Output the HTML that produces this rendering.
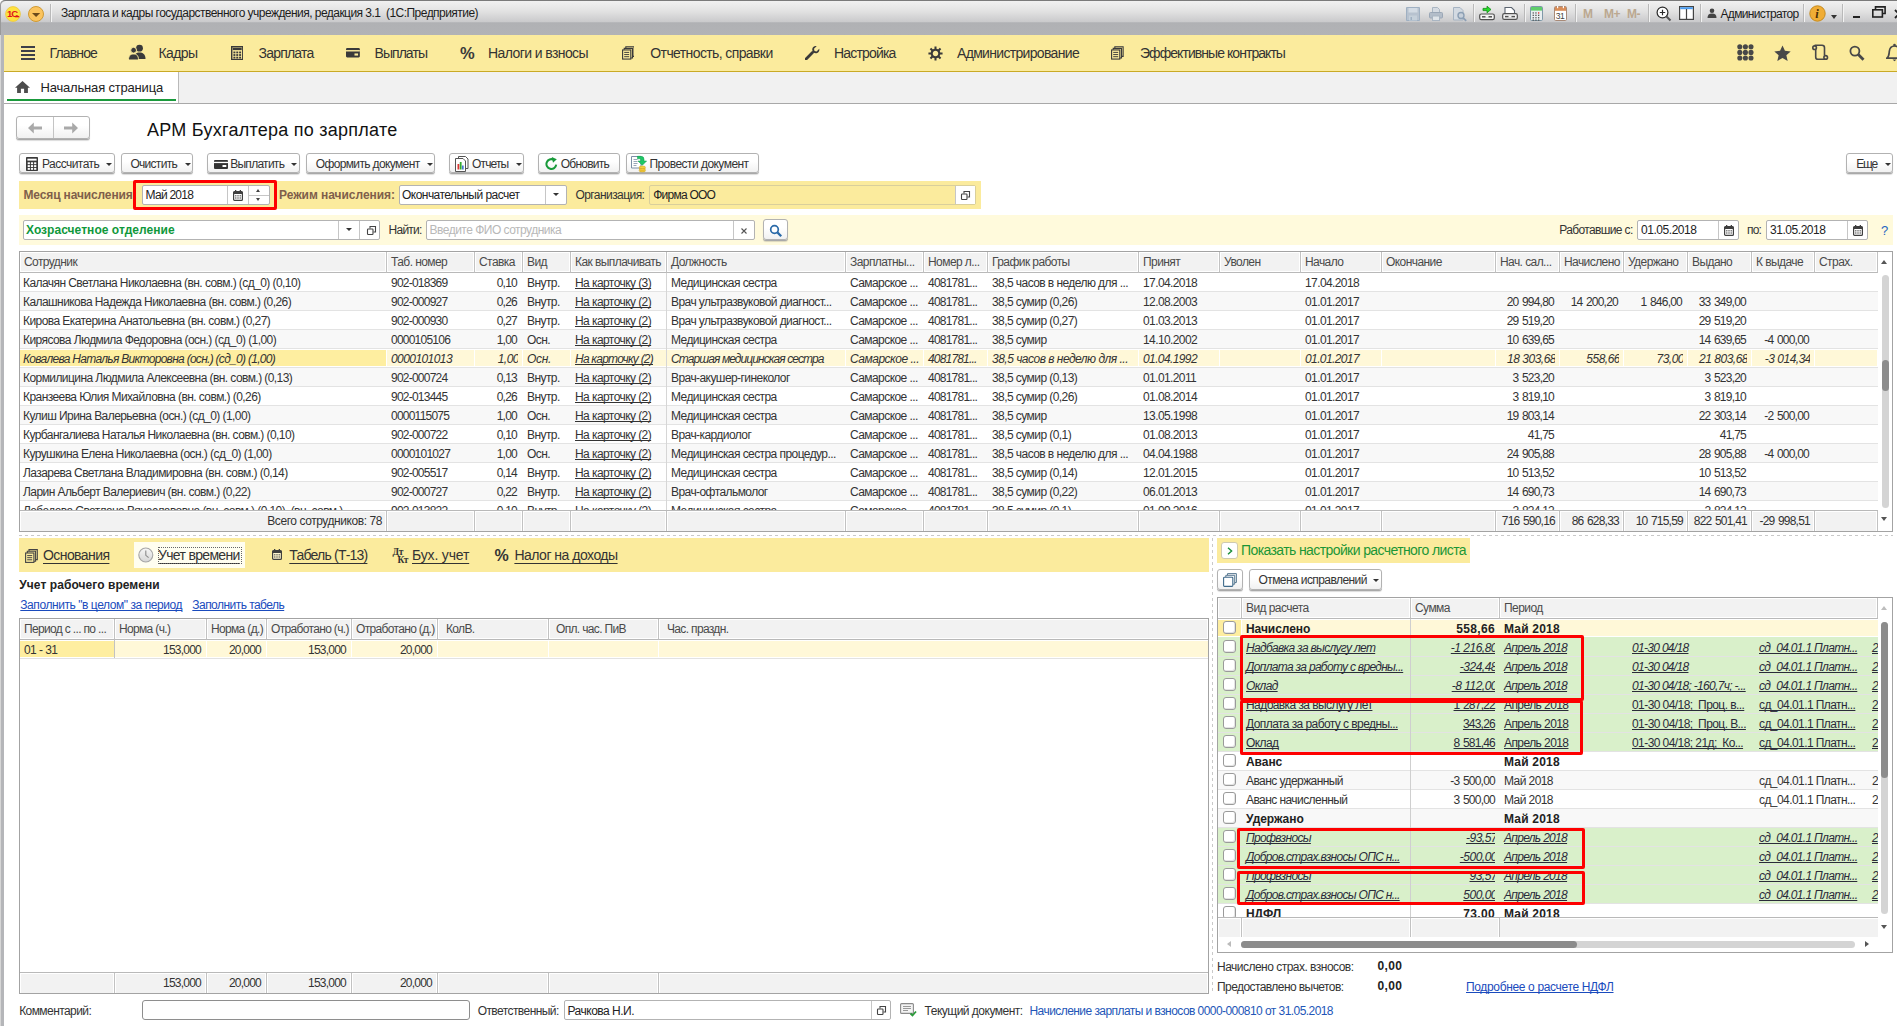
<!DOCTYPE html>
<html lang="ru"><head><meta charset="utf-8"><title>АРМ Бухгалтера по зарплате</title>
<style>
html,body{margin:0;padding:0;background:#fff}
body{width:1897px;height:1026px;overflow:hidden;font-family:"Liberation Sans",sans-serif;font-size:12px;color:#2b2b2b;letter-spacing:-0.55px}
#app{position:relative;width:1897px;height:1026px;overflow:hidden;background:#fff}
#app *{box-sizing:border-box;text-decoration-skip-ink:none}
#app div,#app span,#app i,#app svg{position:absolute;white-space:pre}
i{font-style:normal;display:block}
svg text{font-family:"Liberation Sans",sans-serif}
svg text.sf{font-family:"Liberation Serif",serif}
/* window chrome */
#lb{left:0;top:35px;width:4px;height:991px;background:linear-gradient(to right,#d6d6d6 0,#d6d6d6 1px,#b5b6b9 1px,#b5b6b9 100%)}
#tb{left:0;top:0;width:1897px;height:35px;background:linear-gradient(#f1f1f1 0,#e2e2e2 30%,#cacacc 61%,#b0b1b4 64%,#b2b3b6 100%);border-top:1px solid #7a7a7a;border-top-left-radius:5px;box-shadow:inset 1px 0 0 #9a9a9a}
#tb .t{left:61px;top:5px;font-size:12px;color:#1c1c1c;letter-spacing:-0.52px}
#tb .adm{left:1719px;top:5px;font-size:12px;color:#1c1c1c;letter-spacing:-0.5px}
#tb .sep{top:3px;width:1px;height:18px;background:#b9b9b9;border-right:1px solid #f3f3f3;width:2px}
#tb .m{top:5px;font-size:12px;font-weight:bold;color:#b9a58f;letter-spacing:-0.3px}
#mb{left:4px;top:35px;width:1893px;height:37px;background:#fbeb9d;border-bottom:1px solid #c9aa26}
#mb .mi{top:9px;font-size:14px;color:#333;letter-spacing:-0.9px}
#ts{left:4px;top:72px;width:1893px;height:32px;background:#f1f1f1;border-bottom:1px solid #a8a8a8}
#ts .tab{left:0;top:0;width:175px;height:31px;background:#fff;border-right:1px solid #b9b9b9}
#ts .tab b{display:block;position:absolute;left:3px;top:27px;width:169px;height:2px;background:#1a9a3c}
#ts .tab span{left:36px;top:7px;font-size:13px;color:#222;letter-spacing:-0.2px}
/* buttons */
.btn{height:20px;border:1px solid #b2b2b2;border-radius:3px;background:linear-gradient(#fff 40%,#f1f1f1);box-shadow:0 1px 0 #a9a9a9,0 2px 1px rgba(0,0,0,.14);font-size:12px;color:#333;line-height:18px}
.btn span{top:0}
.dd{width:0;height:0;border-left:3px solid transparent;border-right:3px solid transparent;border-top:3px solid #333}
h1{position:absolute;margin:0;left:147px;top:119px;font-size:18px;font-weight:normal;color:#111;letter-spacing:.25px;line-height:22px}
.inp{height:20px;border:1px solid #b3b3b3;border-radius:2px;background:#fff;line-height:18px;font-size:12px}
.inp span{top:0}
.lbl{font-size:12px;line-height:16px}
a{color:#1a4bbd;text-decoration:underline}
/* grids */
.grid{border:1px solid #a3a3a3;background:#fff;overflow:hidden}
.hc{top:0;height:21px;background:#f2f2f2;box-shadow:inset 0 0 0 1px #fff;border-right:1px solid #c2c2c2;border-bottom:1px solid #b9b9b9;padding:0 0 0 4px;letter-spacing:-0.57px;line-height:20px;color:#4a4a4a;overflow:hidden;box-sizing:border-box;background-clip:padding-box}
.body{overflow:hidden}
.r{left:0;width:100%;height:19px;border-bottom:1px solid #e3e3e3}
.r.alt{background:#f8f8f8}
.r.sel{background:#fff;font-style:italic}
.sel .c,#rt .sel .c{top:1px;height:18px;padding-top:0;background:linear-gradient(#fff8d8,#fff8d8) no-repeat 0 0/100% 16px}
.c{top:0;height:18px;line-height:19px;padding:1px 6px 0 4px;overflow:hidden;letter-spacing:-0.57px;color:#333}
.c.n{letter-spacing:-0.77px;word-spacing:.9px}
.c.d{letter-spacing:-0.6px}
.c.ra{text-align:right}
.c.f{padding-left:3px}
#tt .hc{letter-spacing:-0.66px}
#tt .fc{padding-right:5px}
.c.u{text-decoration:underline}
.sel .c.cur,#rt .sel .c.cur{background:linear-gradient(#feeea0,#feeea0) no-repeat 0 0/100% 16px}
#emp .sel .c{letter-spacing:-0.78px}
.foot{background:#f2f2f2;border-top:1px solid #b9b9b9;box-shadow:inset 0 1px 0 #fff}
.fc{top:0;height:21px;line-height:21px;padding:0 4px 0 3px;border-right:1px solid #c2c2c2;overflow:hidden;box-shadow:inset 1px 0 0 #fff,inset -1px 0 0 #fff;letter-spacing:-0.59px;color:#333}
.fc.n{letter-spacing:-0.77px;word-spacing:.9px}
.fc.ra{text-align:right}
.vsb{background:#fff}
.trk{width:7px;border-radius:4px;background:#d4d4d4}
.thm{width:7px;border-radius:4px;background:#8c8c8c}
.up{width:0;height:0;border-left:3.500px solid transparent;border-right:3.500px solid transparent;border-bottom:4px solid #555}
.up.lt{border-bottom-color:#bdbdbd}
.dn{width:0;height:0;border-left:3.500px solid transparent;border-right:3.500px solid transparent;border-top:4px solid #555}
.hsb{background:#fff}
.hsb .htrk{top:4px;height:7px;border-radius:4px;background:#d4d4d4}
.hsb .hthm{top:4px;height:7px;border-radius:4px;background:#8c8c8c}
.hsb .lf{top:4px;width:0;height:0;border-top:3.500px solid transparent;border-bottom:3.500px solid transparent;border-right:4px solid #bbb}
.hsb .rt{top:4px;width:0;height:0;border-top:3.500px solid transparent;border-bottom:3.500px solid transparent;border-left:4px solid #555}
.dash{height:1px;background:repeating-linear-gradient(to right,#c9c9c9 0,#c9c9c9 3px,transparent 3px,transparent 6px)}
.vdash{width:1px;background:repeating-linear-gradient(to bottom,#c9c9c9 0,#c9c9c9 3px,transparent 3px,transparent 6px)}
/* right grid specifics */
#rt .r.bold{font-weight:bold}
#rt .r.bold .c{font-size:12px;letter-spacing:-0.05px;color:#222}
#rt .r.bold .c.n{letter-spacing:.35px}
#rt .r.bold .c.p{letter-spacing:.2px}
#rt .sel .chk{top:1px}
#rt .r.grn{background:#d9f0ca}
#rt .r.it{font-style:italic}
#rt .r.it .c{letter-spacing:-0.69px}
#rt .r.ul .c{text-decoration:underline;color:#2b2b3a}
#rt .r.sel{font-style:normal;border-bottom-color:#d9f0ca}
#rt .sel .band{left:24px;top:1px;width:636px;height:16px;background:#fff8d8}
#rt .c{padding:1px 5px 0 4px}
#rt .c.n{letter-spacing:-0.77px;word-spacing:.9px}
#rt .c.cb{padding:0;text-decoration:none}
.chk{left:5px;top:2px;width:13px;height:13px;border:1px solid #9a9a9a;border-radius:3px;background:#fff;box-shadow:inset -1px -1px 0 #e4e4e4}
.red{border:3px solid #fe0000;border-radius:2px}

</style></head>
<body>
<div id="app">
<div id="tb"><svg style="left:5px;top:5px" width="16" height="16" viewBox="0 0 16 16"><circle cx="8" cy="8" r="7.400" fill="#ffe23f" stroke="#ecc63a" stroke-width=".800"/><text x="2" y="11.300" font-size="9.500" font-weight="bold" fill="#e0151a" letter-spacing="-1">1С</text><path d="M9.800 10.600H14.200" stroke="#e0151a" stroke-width="1.400"/></svg><svg style="left:28px;top:5px" width="17" height="17" viewBox="0 0 17 17"><circle cx="8" cy="8" r="7.500" fill="#fbc45e" stroke="#cf9a33" stroke-width="1"/><path d="M4 7h8.200l-4.100 3.900z" fill="#6b4a1c"/></svg><i class="sep" style="left:50px"></i><span style="left:61px;top:4.1px;font-size:12px;line-height:16px;letter-spacing:-0.539px;color:#1c1c1c;">Зарплата и кадры государственного учреждения, редакция 3.1  (1С:Предприятие)</span><svg style="left:1406px;top:6px" width="14" height="14" viewBox="0 0 14 14"><path d="M.500 .500h13v13H.500z" fill="#b7c2cf" stroke="#9fb0c2"/><rect x="2.500" y="1" width="9" height="4.500" fill="#d3dbe4"/><rect x="3" y="8.500" width="8" height="5" fill="#c5d0da"/><rect x="4.500" y="10" width="1.500" height="3" fill="#9fb0c2"/></svg><svg style="left:1429px;top:6px" width="14" height="14" viewBox="0 0 14 14"><path d="M3.500 .500h5l2 2v3h-7z" fill="#d5dbe2" stroke="#a9b5c2"/><rect x=".500" y="5.500" width="13" height="5.500" rx="1" fill="#b3bdc9" stroke="#9aa7b6"/><rect x="3.500" y="9" width="7" height="4.500" fill="#dfe4e9" stroke="#a9b5c2"/></svg><svg style="left:1453px;top:6px" width="14" height="15" viewBox="0 0 14 15"><path d="M.500 .500h6.500l3 3v9.500h-9.500z" fill="#d3dae2" stroke="#a5b3c2"/><circle cx="8" cy="8.500" r="3" fill="#c7d0da" stroke="#8c9fb4" stroke-width="1.400"/><path d="M10.200 10.800l3 3" stroke="#8c9fb4" stroke-width="1.800"/></svg><i class="sep" style="left:1473px"></i><svg style="left:1479px;top:4px" width="16" height="16" viewBox="0 0 16 16"><rect x=".700" y="9" width="14.600" height="5.600" rx="1.600" fill="#f4f4f4" stroke="#505050" stroke-width="1.200"/><path d="M3 11.800h10" stroke="#505050" stroke-width="1.500"/><rect x="6.500" y="10.800" width="3" height="2" fill="#f4f4f4"/><path d="M4 3.400h4V1.200L12 4.500 8 7.800V5.600H4z" fill="#25dd2a" stroke="#138a16" stroke-width=".8"/></svg><svg style="left:1502px;top:4px" width="16" height="16" viewBox="0 0 16 16"><path d="M3 9V2.500h6.500l3 3V9" fill="#fff" stroke="#5b6470" stroke-width="1.100"/><rect x=".700" y="8.600" width="14.600" height="5.800" rx="1.600" fill="#f4f4f4" stroke="#505050" stroke-width="1.200"/><path d="M3 11.600h10" stroke="#505050" stroke-width="1.500"/><rect x="6.500" y="10.600" width="3" height="2" fill="#f4f4f4"/></svg><i class="sep" style="left:1524px"></i><svg style="left:1530px;top:5px" width="13" height="15" viewBox="0 0 13 15"><rect x=".500" y=".500" width="12" height="14" rx="1.200" fill="#e9eef0" stroke="#7f99a8"/><rect x="1" y="1" width="11" height="3.600" fill="#5fce6b"/><rect x="2.6" y="6.3" width="1.300" height="1.300" fill="#555"/><rect x="2.6" y="8.7" width="1.300" height="1.300" fill="#555"/><rect x="2.6" y="11.1" width="1.300" height="1.300" fill="#555"/><rect x="2.6" y="13.5" width="1.300" height="1.300" fill="#555"/><rect x="5.3" y="6.3" width="1.300" height="1.300" fill="#555"/><rect x="5.3" y="8.7" width="1.300" height="1.300" fill="#555"/><rect x="5.3" y="11.1" width="1.300" height="1.300" fill="#555"/><rect x="5.3" y="13.5" width="1.300" height="1.300" fill="#555"/><rect x="8" y="6.3" width="1.300" height="1.300" fill="#e02020"/><rect x="8" y="8.7" width="1.300" height="1.300" fill="#555"/><rect x="8" y="11.1" width="1.300" height="1.300" fill="#555"/><rect x="8" y="13.5" width="1.300" height="1.300" fill="#555"/></svg><svg style="left:1554px;top:5px" width="13" height="15" viewBox="0 0 13 15"><rect x=".500" y=".500" width="12" height="14" rx="1.200" fill="#fff" stroke="#a88a78"/><rect x="1" y="1" width="11" height="3.800" fill="#d98d58"/><rect x="3" y="0" width="1.200" height="2.200" fill="#fff"/><rect x="8.800" y="0" width="1.200" height="2.200" fill="#fff"/><text x="1.800" y="12.800" font-size="8.500" fill="#444" letter-spacing="-0.500">31</text></svg><i class="sep" style="left:1575px"></i><span style="left:1583px;top:4.8px;font-size:12px;line-height:16px;letter-spacing:0px;color:#bba890;font-weight:bold;">M</span><span style="left:1604px;top:4.8px;font-size:12px;line-height:16px;letter-spacing:-0.5px;color:#bba890;font-weight:bold;">M+</span><span style="left:1627px;top:4.8px;font-size:12px;line-height:16px;letter-spacing:-0.5px;color:#bba890;font-weight:bold;">M-</span><i class="sep" style="left:1648px"></i><svg style="left:1656px;top:5px" width="16" height="16" viewBox="0 0 16 16"><circle cx="6.500" cy="6.500" r="5.400" fill="#fff" stroke="#2a2a2a" stroke-width="1.200"/><path d="M6.500 3.800v5.400M3.800 6.500h5.400" stroke="#2a2a2a" stroke-width="1.200"/><path d="M10.500 10.500l4 4" stroke="#555" stroke-width="2"/></svg><svg style="left:1679px;top:5px" width="15" height="14" viewBox="0 0 15 14"><rect x=".600" y=".600" width="13.800" height="12.800" fill="#fff" stroke="#444" stroke-width="1.200"/><rect x="1.200" y="1.200" width="12.600" height="2" fill="#4a9cf0"/><path d="M7.500 3v10.500" stroke="#444" stroke-width="1.200"/></svg><i class="sep" style="left:1700px"></i><svg style="left:1707px;top:7px" width="10" height="10" viewBox="0 0 10 10"><circle cx="5" cy="2.700" r="2.300" fill="#444"/><path d="M.500 10c0-3.200 1.500-4.500 4.500-4.500s4.500 1.300 4.500 4.500z" fill="#444"/></svg><span style="left:1720.5px;top:4.8px;font-size:12px;line-height:16px;letter-spacing:-0.66px;color:#1c1c1c;">Администратор</span><i class="sep" style="left:1803px"></i><svg style="left:1809px;top:4px" width="17" height="17" viewBox="0 0 17 17"><circle cx="8.5" cy="8.5" r="7.7" fill="#f0ad35" stroke="#c58a1e" stroke-width="1"/><text x="6.2" y="13" class="sf" font-size="12.5" font-weight="bold" font-style="italic" fill="#4a2e06">i</text></svg><i class="dd" style="left:1831px;top:14px;border-width:4px 3.500px 0 3.500px;border-top-color:#333"></i><i class="sep" style="left:1842px"></i><i style="left:1853px;top:15px;width:7px;height:2px;background:#222"></i><svg style="left:1872px;top:5px" width="14" height="12" viewBox="0 0 14 12"><path d="M3.5 3.5V.9h9.6v6.6h-2.6" fill="none" stroke="#222" stroke-width="1.6"/><rect x=".8" y="3.8" width="9.6" height="7.2" fill="none" stroke="#222" stroke-width="1.6"/></svg><svg style="left:1894px;top:8px" width="10" height="10" viewBox="0 0 10 10"><path d="M1 1l8 8M9 1l-8 8" stroke="#222" stroke-width="1.8"/></svg></div>
<div id="lb"></div>
<div id="mb"><svg style="left:17px;top:11px" width="14" height="14" viewBox="0 0 14 14"><path d="M0 1h14M0 5h14M0 9h14M0 13h14" stroke="#3d3f49" stroke-width="2"/></svg><span style="left:45.5px;top:9.3px;font-size:14px;line-height:18px;letter-spacing:-0.857px;color:#333;">Главное</span><svg style="left:124px;top:9px" width="18" height="17" viewBox="0 0 18 17"><circle cx="11.5" cy="4.2" r="3.4" fill="#3a3a3a"/><path d="M6 15c0-5 2.3-6.5 5.5-6.5S17.5 10 17.500 15z" fill="#3a3a3a"/><circle cx="5.6" cy="6.2" r="2.9" fill="#3a3a3a" stroke="#fbeb9d" stroke-width="1"/><path d="M.5 16c0-4.6 2-6 5-6s5 1.400 5 6z" fill="#3a3a3a" stroke="#fbeb9d" stroke-width="1"/></svg><span style="left:154.5px;top:9.3px;font-size:14px;line-height:18px;letter-spacing:-0.594px;color:#333;">Кадры</span><svg style="left:226.800px;top:10.700px" width="12.500" height="14.300" viewBox="0 0 14 16"><rect x=".8" y=".8" width="12.4" height="14.4" fill="none" stroke="#3a3a3a" stroke-width="1.6"/><rect x="2" y="2" width="10" height="2.6" fill="#3a3a3a"/><g fill="#3a3a3a"><rect x="2.7" y="6.2" width="2.2" height="2"/><rect x="5.9" y="6.2" width="2.2" height="2"/><rect x="9.1" y="6.2" width="2.2" height="2"/><rect x="2.7" y="9.100" width="2.2" height="2"/><rect x="5.9" y="9.100" width="2.2" height="2"/><rect x="9.1" y="9.100" width="2.2" height="2"/><rect x="2.7" y="12" width="2.2" height="2"/><rect x="5.9" y="12" width="2.2" height="2"/><rect x="9.1" y="12" width="2.2" height="2"/></g></svg><span style="left:254.5px;top:9.3px;font-size:14px;line-height:18px;letter-spacing:-0.789px;color:#333;">Зарплата</span><svg style="left:342px;top:12.800px" width="14.300" height="10" viewBox="0 0 16 11"><rect x="0" y="0" width="15.500" height="10.5" rx="1.3" fill="#3a3a3a"/><rect x="0" y="2.2" width="15.5" height="1.6" fill="#fbeb9d"/><rect x="9.500" y="6" width="4" height="2.4" fill="#fbeb9d"/></svg><span style="left:370.5px;top:9.3px;font-size:14px;line-height:18px;letter-spacing:-0.944px;color:#333;">Выплаты</span><span style="left:456px;top:7.6px;font-size:16.5px;line-height:21px;letter-spacing:0px;color:#3a3a3a;font-weight:bold;">%</span><span style="left:484px;top:9.3px;font-size:14px;line-height:18px;letter-spacing:-0.589px;color:#333;">Налоги и взносы</span><svg style="left:617.5px;top:11.300px" width="12.800" height="13.700" viewBox="0 0 15 16"><path d="M4.5 2.500V.8h9.7v11.4h-2" fill="none" stroke="#3a3a3a" stroke-width="1.3"/><path d="M2.6 4.4V2.700h9.700v11.400h-2" fill="none" stroke="#3a3a3a" stroke-width="1.3"/><rect x=".7" y="4.6" width="9.6" height="10.700" fill="#fbeb9d" stroke="#3a3a3a" stroke-width="1.3"/><path d="M2.6 7.500h5.800M2.600 10h5.800M2.600 12.500h5.800" stroke="#3a3a3a" stroke-width="1.1"/></svg><span style="left:646.3px;top:9.3px;font-size:14px;line-height:18px;letter-spacing:-0.609px;color:#333;">Отчетность, справки</span><svg style="left:800.500px;top:11px" width="15" height="14" viewBox="0 0 17 16"><path d="M1.2 14.800L8.500 7.500" stroke="#3a3a3a" stroke-width="3.200" stroke-linecap="round"/><path d="M16.2 3.200l-3 3-2.400-.6-.6-2.400 3-3c-2.800-.7-5.600 1.700-4.900 4.700.4 2.600 3.200 4 5.500 3.100 1.900-.8 2.900-2.800 2.400-4.800z" fill="#3a3a3a"/></svg><span style="left:830px;top:9.3px;font-size:14px;line-height:18px;letter-spacing:-0.814px;color:#333;">Настройка</span><svg style="left:923.500px;top:10.800px" width="15" height="15" viewBox="0 0 17 17"><g transform="translate(8.5 8.5)"><circle r="4.3" fill="none" stroke="#3a3a3a" stroke-width="2.400"/><g stroke="#3a3a3a" stroke-width="2.300"><path d="M0-8v3M0 5v3M-8 0h3M5 0h3M-5.700-5.700l2.200 2.200M3.500 3.500l2.200 2.200M-5.700 5.700l2.200-2.200M3.500-3.500l2.200-2.200"/></g></g></svg><span style="left:953px;top:9.3px;font-size:14px;line-height:18px;letter-spacing:-0.676px;color:#333;">Администрирование</span><svg style="left:1107.3px;top:11.300px" width="12.800" height="13.700" viewBox="0 0 15 16"><path d="M4.5 2.500V.8h9.7v11.4h-2" fill="none" stroke="#3a3a3a" stroke-width="1.3"/><path d="M2.6 4.4V2.700h9.700v11.400h-2" fill="none" stroke="#3a3a3a" stroke-width="1.3"/><rect x=".7" y="4.6" width="9.6" height="10.700" fill="#fbeb9d" stroke="#3a3a3a" stroke-width="1.3"/><path d="M2.6 7.500h5.800M2.600 10h5.800M2.600 12.500h5.800" stroke="#3a3a3a" stroke-width="1.1"/></svg><span style="left:1136px;top:9.3px;font-size:14px;line-height:18px;letter-spacing:-0.946px;color:#333;">Эффективные контракты</span><svg style="left:1733px;top:9.2px" width="17" height="17" viewBox="0 0 17 17"><g fill="#484848"><circle cx="2.8" cy="2.8" r="2.550"/><circle cx="2.8" cy="8.4" r="2.550"/><circle cx="2.8" cy="14" r="2.550"/><circle cx="8.4" cy="2.8" r="2.550"/><circle cx="8.4" cy="8.4" r="2.550"/><circle cx="8.4" cy="14" r="2.550"/><circle cx="14" cy="2.8" r="2.550"/><circle cx="14" cy="8.4" r="2.550"/><circle cx="14" cy="14" r="2.550"/></g></svg><svg style="left:1770px;top:10px" width="17" height="16" viewBox="0 0 18 17"><path d="M9 .5l2.600 5.700 6.100.6-4.600 4.100 1.400 6.100L9 13.800 3.500 17l1.400-6.100L.3 6.800l6.100-.6z" fill="#484848"/></svg><svg style="left:1808px;top:9px" width="17" height="18" viewBox="0 0 17 18"><g fill="none" stroke="#484848" stroke-width="1.600"><circle cx="2.600" cy="3.700" r="1.800"/><path d="M2.600 1.300H10Q12.500 1.300 12.500 3.800V11.400"/><circle cx="13.700" cy="13.400" r="1.800"/><path d="M13.700 15.300H6.100Q3.700 15.300 3.700 12.900V5.600"/></g></svg><svg style="left:1845px;top:10px" width="17" height="17" viewBox="0 0 17 17"><circle cx="5.900" cy="6.100" r="4.500" fill="none" stroke="#484848" stroke-width="1.800"/><path d="M9.300 9.500l5.200 5.200" stroke="#484848" stroke-width="2.800"/></svg><svg style="left:1882px;top:8px" width="16" height="19" viewBox="0 0 16 19"><path d="M.800 15.200c2.400-1.600 2.200-4 2.500-6.800C3.700 5 6 3 8.500 3s4.800 2 5.200 5.400c.3 2.800.1 5.200 2.500 6.800z" fill="none" stroke="#484848" stroke-width="1.700"/><circle cx="8.500" cy="2" r="1.300" fill="#484848"/><path d="M6.500 16.500l2 1.800 2-1.800z" fill="#484848"/></svg></div>
<div id="ts"><div class="tab"><svg style="left:11px;top:8.800px" width="15" height="12" viewBox="0 0 15 12"><path d="M7.500 0L0 6.800h2.100V12h3.800V7.800h3.200V12h3.800V6.800H15z" fill="#4d4d4d"/></svg><span style="left:36.5px;top:6.9px;font-size:13px;line-height:17px;letter-spacing:-0.183px;color:#222;">Начальная страница</span><b></b></div></div>
<div class="btn" style="left:16px;top:116px;width:74px;height:23px"><i style="left:36px;top:0;width:1px;height:21px;background:#c4c4c4"></i><svg style="left:11px;top:5px" width="15" height="12" viewBox="0 0 15 12"><path d="M0 6L5.800.500V4.500H14v3H5.800v4z" fill="#a9a9a9"/></svg><svg style="left:47px;top:5px" width="15" height="12" viewBox="0 0 15 12"><path d="M14 6L8.200.500V4.500H0v3h8.200v4z" fill="#a9a9a9"/></svg></div>
<h1 style="letter-spacing:0.252px">АРМ Бухгалтера по зарплате</h1>
<div class="btn" style="left:19px;top:153px;width:96px;height:20px"><svg style="left:6px;top:3px" width="12" height="14" viewBox="0 0 12 14"><rect width="12" height="14" rx=".8" fill="#3a3a3a"/><g fill="#fff"><rect x="1.400" y="1.700" width="9.200" height="1.900"/><rect x="1.7" y="5.3" width="2.200" height="1.900"/><rect x="1.7" y="8.1" width="2.200" height="1.900"/><rect x="1.7" y="10.9" width="2.200" height="1.900"/><rect x="4.9" y="5.3" width="2.200" height="1.900"/><rect x="4.9" y="8.1" width="2.200" height="1.900"/><rect x="4.9" y="10.9" width="2.200" height="1.900"/><rect x="8.1" y="5.3" width="2.200" height="1.900"/><rect x="8.1" y="8.1" width="2.200" height="1.900"/><rect x="8.1" y="10.9" width="2.200" height="1.900"/></g></svg><span style="left:22px;top:2px;font-size:12px;line-height:16px;letter-spacing:-0.542px;color:#333;">Рассчитать</span><i class="dd" style="left:85.5px;top:9px"></i></div>
<div class="btn" style="left:121px;top:153px;width:72px;height:20px"><span style="left:8.4px;top:2px;font-size:12px;line-height:16px;letter-spacing:-0.706px;color:#333;">Очистить</span><i class="dd" style="left:62.5px;top:9px"></i></div>
<div class="btn" style="left:207px;top:153px;width:93px;height:20px"><svg style="left:6px;top:6px" width="14" height="9" viewBox="0 0 14 9"><rect width="14" height="9" rx="1" fill="#333"/><rect y="1.800" width="14" height="1.300" fill="#fff"/><rect x="8.500" y="5" width="3.800" height="2" fill="#fff"/></svg><span style="left:22.2px;top:2px;font-size:12px;line-height:16px;letter-spacing:-0.722px;color:#333;">Выплатить</span><i class="dd" style="left:83px;top:9px"></i></div>
<div class="btn" style="left:306px;top:153px;width:129px;height:20px"><span style="left:8.7px;top:2px;font-size:12px;line-height:16px;letter-spacing:-0.633px;color:#333;">Оформить документ</span><i class="dd" style="left:119.5px;top:9px"></i></div>
<div class="btn" style="left:449px;top:153px;width:75px;height:20px"><svg style="left:5px;top:2px" width="16" height="16" viewBox="0 0 16 16"><path d="M3.500 2.500V.500h7l2.500 2.500v9.500h-2" fill="#fff" stroke="#555"/><path d="M.5 2.500h7.500l2.500 2.500v10.500H.5z" fill="#fff" stroke="#555"/><rect x="2.500" y="8" width="1.800" height="5.500" fill="#d33"/><rect x="4.800" y="6" width="1.800" height="7.500" fill="#3a3"/><rect x="7.100" y="9.500" width="1.500" height="4" fill="#36c"/></svg><span style="left:22px;top:2px;font-size:12px;line-height:16px;letter-spacing:-0.847px;color:#333;">Отчеты</span><i class="dd" style="left:65.5px;top:9px"></i></div>
<div class="btn" style="left:538px;top:153px;width:82px;height:20px"><svg style="left:6px;top:3px" width="13" height="14" viewBox="0 0 13 14"><path d="M11.200 7.600A4.900 4.900 0 1 1 8.600 2.700" fill="none" stroke="#189a3a" stroke-width="2"/><path d="M6.800 0L11.800 2.300 8 5.800z" fill="#189a3a"/></svg><span style="left:21.8px;top:2px;font-size:12px;line-height:16px;letter-spacing:-0.78px;color:#333;">Обновить</span></div>
<div class="btn" style="left:626px;top:153px;width:133px;height:20px"><svg style="left:4px;top:1px" width="17" height="18" viewBox="0 0 17 18"><path d="M.500 1.500h9.500v11.500h-9.500z" fill="#fff" stroke="#7c8ea6"/><path d="M2.500 4.500h4M2.500 6.500h4M2.500 8.500h4M2.500 10.500h3" stroke="#9aa7b8"/><path d="M6.500 1.300h3.500q3 0 3 3V6h2.600L11.300 10.300 7 6h2.700V4.600q0-.8-.8-.8H6.500z" fill="#1fc766" stroke="#0c9a48" stroke-width=".5"/><g fill="#f6cf3e" stroke="#c79a1c" stroke-width=".5"><ellipse cx="11.300" cy="15.700" rx="3.200" ry="1.300"/><ellipse cx="11.300" cy="14" rx="3.200" ry="1.300"/><ellipse cx="11.300" cy="12.300" rx="3.200" ry="1.300"/></g></svg><span style="left:22.4px;top:2px;font-size:12px;line-height:16px;letter-spacing:-0.542px;color:#333;">Провести документ</span></div>
<div class="btn" style="left:1846px;top:153px;width:47px;height:20px"><span style="left:9.3px;top:2px;font-size:12px;line-height:16px;letter-spacing:-1.307px;color:#333;">Еще</span><i class="dd" style="left:37.5px;top:9px"></i></div>
<div style="left:19px;top:181px;width:962px;height:28px;background:#fbeb9d"></div>
<span style="left:23.5px;top:187px;font-size:12px;line-height:16px;letter-spacing:-0.136px;color:#7f5f4b;font-weight:bold;">Месяц начисления:</span><div class="inp" style="left:142px;top:185px;width:128px"><i style="left:84px;top:0;width:1px;height:18px;background:#c6c6c6"></i><i style="left:105px;top:0;width:1px;height:18px;background:#c6c6c6"></i><i style="left:106px;top:8.500px;width:20px;height:1px;background:#c6c6c6"></i><span style="left:2.6px;top:1px;font-size:12px;line-height:16px;letter-spacing:-0.756px;color:#222;">Май 2018</span><svg style="left:90px;top:3.5px" width="10" height="11" viewBox="0 0 10 11"><rect x=".600" y="1.600" width="8.800" height="8.800" rx="1" fill="#fff" stroke="#3f3f3f" stroke-width="1.200"/><rect x=".600" y="1.600" width="8.800" height="2.400" fill="#3f3f3f"/><rect x="2" y="0" width="1.300" height="2.200" fill="#3f3f3f"/><rect x="6.700" y="0" width="1.300" height="2.200" fill="#3f3f3f"/><g fill="#3f3f3f"><rect x="2.200" y="5.200" width="1.200" height="1.200"/><rect x="4.400" y="5.200" width="1.200" height="1.200"/><rect x="6.600" y="5.200" width="1.200" height="1.200"/><rect x="2.200" y="7.400" width="1.200" height="1.200"/><rect x="4.400" y="7.400" width="1.200" height="1.200"/><rect x="6.600" y="7.400" width="1.200" height="1.200"/></g></svg><i class="dd" style="left:113px;top:3px;border-width:0 2px 3px 2px;border-color:transparent transparent #444 transparent;border-style:solid"></i><i class="dd" style="left:113px;top:12px;border-width:3px 2px 0 2px;border-color:#444 transparent transparent transparent;border-style:solid"></i></div>
<span style="left:279px;top:187px;font-size:12px;line-height:16px;letter-spacing:-0.042px;color:#7f5f4b;font-weight:bold;">Режим начисления:</span><div class="inp" style="left:399px;top:185px;width:168px"><i style="left:145px;top:0;width:1px;height:18px;background:#c6c6c6"></i><span style="left:2px;top:1px;font-size:12px;line-height:16px;letter-spacing:-0.53px;color:#222;">Окончательный расчет</span><i class="dd" style="left:153px;top:7px"></i></div>
<span style="left:575.4px;top:187px;font-size:12px;line-height:16px;letter-spacing:-0.56px;color:#333;">Организация:</span><div class="inp" style="left:649px;top:185px;width:327px;background:#fbeb9d;border-color:#d9cf9c"><i style="left:305px;top:0;width:20px;height:18px;background:#fff;border-left:1px solid #c6c6c6"></i><span style="left:3.2px;top:1px;font-size:12px;line-height:16px;letter-spacing:-0.752px;color:#222;">Фирма ООО</span><svg style="left:310px;top:3.5px" width="11" height="11" viewBox="0 0 11 11"><path d="M4 3.500V1.500h5.500v5.500H7.500" fill="none" stroke="#444" stroke-width="1.100"/><rect x="1.500" y="4" width="5.500" height="5.500" rx=".700" fill="#fff" stroke="#444" stroke-width="1.100"/></svg></div>
<div class="red" style="left:133px;top:180px;width:144px;height:30px"></div>
<div style="left:19px;top:215px;width:1874px;height:30px;background:#fffadc"></div>
<div class="inp" style="left:23px;top:220px;width:357px"><i style="left:314px;top:0;width:1px;height:18px;background:#c6c6c6"></i><i style="left:335px;top:0;width:1px;height:18px;background:#c6c6c6"></i><span style="left:2px;top:1px;font-size:12px;line-height:16px;letter-spacing:0.042px;color:#10983b;font-weight:bold;">Хозрасчетное отделение</span><i class="dd" style="left:321.5px;top:7px"></i><svg style="left:341.5px;top:3.5px" width="11" height="11" viewBox="0 0 11 11"><path d="M4 3.500V1.500h5.500v5.500H7.500" fill="none" stroke="#444" stroke-width="1.100"/><rect x="1.500" y="4" width="5.500" height="5.500" rx=".700" fill="#fff" stroke="#444" stroke-width="1.100"/></svg></div>
<span style="left:388.6px;top:222px;font-size:12px;line-height:16px;letter-spacing:-0.763px;color:#333;">Найти:</span><div class="inp" style="left:426px;top:220px;width:329px"><i style="left:306px;top:0;width:1px;height:18px;background:#c6c6c6"></i><span style="left:2.6px;top:1px;font-size:12px;line-height:16px;letter-spacing:-0.516px;color:#b8b8b8;">Введите ФИО сотрудника</span><svg style="left:313px;top:5.500px" width="8" height="8" viewBox="0 0 8 8"><path d="M1.500 1.500l5 5M6.500 1.500l-5 5" stroke="#555" stroke-width="1.100"/></svg></div>
<div class="btn" style="left:763px;top:219px;width:25px;height:21px"><svg style="left:5px;top:3.500px" width="14" height="14" viewBox="0 0 14 14"><circle cx="5.500" cy="5.500" r="3.800" fill="#fff" stroke="#2a6aa8" stroke-width="1.700"/><path d="M8.400 8.400l3.800 3.800" stroke="#2a6aa8" stroke-width="2.300"/></svg></div>
<span style="left:1559.2px;top:222px;font-size:12px;line-height:16px;letter-spacing:-0.627px;color:#333;">Работавшие с:</span><div class="inp" style="left:1637px;top:220px;width:102px"><i style="left:80px;top:0;width:1px;height:18px;background:#c6c6c6"></i><span style="left:3px;top:1px;font-size:12px;line-height:16px;letter-spacing:-0.456px;color:#222;">01.05.2018</span><svg style="left:85.5px;top:3.5px" width="10" height="11" viewBox="0 0 10 11"><rect x=".600" y="1.600" width="8.800" height="8.800" rx="1" fill="#fff" stroke="#3f3f3f" stroke-width="1.200"/><rect x=".600" y="1.600" width="8.800" height="2.400" fill="#3f3f3f"/><rect x="2" y="0" width="1.300" height="2.200" fill="#3f3f3f"/><rect x="6.700" y="0" width="1.300" height="2.200" fill="#3f3f3f"/><g fill="#3f3f3f"><rect x="2.200" y="5.200" width="1.200" height="1.200"/><rect x="4.400" y="5.200" width="1.200" height="1.200"/><rect x="6.600" y="5.200" width="1.200" height="1.200"/><rect x="2.200" y="7.400" width="1.200" height="1.200"/><rect x="4.400" y="7.400" width="1.200" height="1.200"/><rect x="6.600" y="7.400" width="1.200" height="1.200"/></g></svg></div>
<span style="left:1747px;top:222px;font-size:12px;line-height:16px;letter-spacing:-0.839px;color:#333;">по:</span><div class="inp" style="left:1766px;top:220px;width:102px"><i style="left:80px;top:0;width:1px;height:18px;background:#c6c6c6"></i><span style="left:3px;top:1px;font-size:12px;line-height:16px;letter-spacing:-0.456px;color:#222;">31.05.2018</span><svg style="left:85.5px;top:3.5px" width="10" height="11" viewBox="0 0 10 11"><rect x=".600" y="1.600" width="8.800" height="8.800" rx="1" fill="#fff" stroke="#3f3f3f" stroke-width="1.200"/><rect x=".600" y="1.600" width="8.800" height="2.400" fill="#3f3f3f"/><rect x="2" y="0" width="1.300" height="2.200" fill="#3f3f3f"/><rect x="6.700" y="0" width="1.300" height="2.200" fill="#3f3f3f"/><g fill="#3f3f3f"><rect x="2.200" y="5.200" width="1.200" height="1.200"/><rect x="4.400" y="5.200" width="1.200" height="1.200"/><rect x="6.600" y="5.200" width="1.200" height="1.200"/><rect x="2.200" y="7.400" width="1.200" height="1.200"/><rect x="4.400" y="7.400" width="1.200" height="1.200"/><rect x="6.600" y="7.400" width="1.200" height="1.200"/></g></svg></div>
<span style="left:1881px;top:221.5px;font-size:13px;line-height:17px;letter-spacing:0px;color:#1f66c2;">?</span><div class="grid" id="emp" style="left:19px;top:251px;width:1874px;height:281px">
<div class="hc" style="left:0px;top:0;width:367px">Сотрудник</div><div class="hc" style="left:367px;top:0;width:88px">Таб. номер</div><div class="hc" style="left:455px;top:0;width:48px">Ставка</div><div class="hc" style="left:503px;top:0;width:48px">Вид</div><div class="hc" style="left:551px;top:0;width:96px">Как выплачивать</div><div class="hc" style="left:647px;top:0;width:179px">Должность</div><div class="hc" style="left:826px;top:0;width:78px">Зарплатны...</div><div class="hc" style="left:904px;top:0;width:64px">Номер л...</div><div class="hc" style="left:968px;top:0;width:151px">График работы</div><div class="hc" style="left:1119px;top:0;width:81px">Принят</div><div class="hc" style="left:1200px;top:0;width:81px">Уволен</div><div class="hc" style="left:1281px;top:0;width:81px">Начало</div><div class="hc" style="left:1362px;top:0;width:114px">Окончание</div><div class="hc" style="left:1476px;top:0;width:64px">Нач. сал...</div><div class="hc" style="left:1540px;top:0;width:64px">Начислено</div><div class="hc" style="left:1604px;top:0;width:64px">Удержано</div><div class="hc" style="left:1668px;top:0;width:64px">Выдано</div><div class="hc" style="left:1732px;top:0;width:63px">К выдаче</div><div class="hc" style="left:1795px;top:0;width:63px">Страх.</div><div class="body" style="left:0;top:21px;width:1858px;height:237px">
<div class="r" style="top:0px"><span class="c f" style="left:0px;width:367px">Калачян Светлана Николаевна (вн. совм.) (сд_0) (0,10)</span><span class="c n" style="left:367px;width:88px">902-018369</span><span class="c ra n" style="left:455px;width:48px">0,10</span><span class="c" style="left:503px;width:48px">Внутр.</span><span class="c u" style="left:551px;width:96px">На карточку (3)</span><span class="c" style="left:647px;width:179px">Медицинская сестра</span><span class="c" style="left:826px;width:78px">Самарское ...</span><span class="c n" style="left:904px;width:64px">4081781...</span><span class="c" style="left:968px;width:151px">38,5 часов в неделю для ...</span><span class="c d" style="left:1119px;width:81px">17.04.2018</span><span class="c d" style="left:1281px;width:81px">17.04.2018</span></div>
<div class="r alt" style="top:19px"><span class="c f" style="left:0px;width:367px">Калашникова Надежда Николаевна (вн. совм.) (0,26)</span><span class="c n" style="left:367px;width:88px">902-000927</span><span class="c ra n" style="left:455px;width:48px">0,26</span><span class="c" style="left:503px;width:48px">Внутр.</span><span class="c u" style="left:551px;width:96px">На карточку (2)</span><span class="c" style="left:647px;width:179px">Врач ультразвуковой диагност...</span><span class="c" style="left:826px;width:78px">Самарское ...</span><span class="c n" style="left:904px;width:64px">4081781...</span><span class="c" style="left:968px;width:151px">38,5 сумир (0,26)</span><span class="c d" style="left:1119px;width:81px">12.08.2003</span><span class="c d" style="left:1281px;width:81px">01.01.2017</span><span class="c ra n" style="left:1476px;width:64px">20 994,80</span><span class="c ra n" style="left:1540px;width:64px">14 200,20</span><span class="c ra n" style="left:1604px;width:64px">1 846,00</span><span class="c ra n" style="left:1668px;width:64px">33 349,00</span></div>
<div class="r" style="top:38px"><span class="c f" style="left:0px;width:367px">Кирова Екатерина Анатольевна (вн. совм.) (0,27)</span><span class="c n" style="left:367px;width:88px">902-000930</span><span class="c ra n" style="left:455px;width:48px">0,27</span><span class="c" style="left:503px;width:48px">Внутр.</span><span class="c u" style="left:551px;width:96px">На карточку (2)</span><span class="c" style="left:647px;width:179px">Врач ультразвуковой диагност...</span><span class="c" style="left:826px;width:78px">Самарское ...</span><span class="c n" style="left:904px;width:64px">4081781...</span><span class="c" style="left:968px;width:151px">38,5 сумир (0,27)</span><span class="c d" style="left:1119px;width:81px">01.03.2013</span><span class="c d" style="left:1281px;width:81px">01.01.2017</span><span class="c ra n" style="left:1476px;width:64px">29 519,20</span><span class="c ra n" style="left:1668px;width:64px">29 519,20</span></div>
<div class="r alt" style="top:57px"><span class="c f" style="left:0px;width:367px">Кирясова Людмила Федоровна (осн.) (сд_0) (1,00)</span><span class="c n" style="left:367px;width:88px">0000105106</span><span class="c ra n" style="left:455px;width:48px">1,00</span><span class="c" style="left:503px;width:48px">Осн.</span><span class="c u" style="left:551px;width:96px">На карточку (2)</span><span class="c" style="left:647px;width:179px">Медицинская сестра</span><span class="c" style="left:826px;width:78px">Самарское ...</span><span class="c n" style="left:904px;width:64px">4081781...</span><span class="c" style="left:968px;width:151px">38,5 сумир</span><span class="c d" style="left:1119px;width:81px">14.10.2002</span><span class="c d" style="left:1281px;width:81px">01.01.2017</span><span class="c ra n" style="left:1476px;width:64px">10 639,65</span><span class="c ra n" style="left:1668px;width:64px">14 639,65</span><span class="c ra n" style="left:1732px;width:63px">-4 000,00</span></div>
<div class="r sel" style="top:76px"><span class="c cur f" style="left:0px;width:366px;letter-spacing:-0.711px">Ковалева Наталья Викторовна (осн.) (сд_0) (1,00)</span><span class="c n" style="left:367px;width:87px;letter-spacing:-0.575px">0000101013</span><span class="c ra n" style="left:455px;width:47px;padding-right:3px;letter-spacing:-0.5px;word-spacing:0">1,00</span><i style="left:498px;top:1px;width:4px;height:16px;background:#fff8d8"></i><span class="c" style="left:503px;width:47px;letter-spacing:-0.32px">Осн.</span><span class="c u" style="left:551px;width:95px;letter-spacing:-0.771px">На карточку (2)</span><span class="c" style="left:647px;width:178px;letter-spacing:-0.915px">Старшая медицинская сестра</span><span class="c" style="left:826px;width:77px;letter-spacing:-0.493px">Самарское ...</span><span class="c n" style="left:904px;width:63px;letter-spacing:-0.822px">4081781...</span><span class="c" style="left:968px;width:150px;letter-spacing:-0.51px">38,5 часов в неделю для ...</span><span class="c d" style="left:1119px;width:80px;letter-spacing:-0.606px">01.04.1992</span><span class="c d" style="left:1200px;width:80px"></span><span class="c d" style="left:1281px;width:80px;letter-spacing:-0.606px">01.01.2017</span><span class="c d" style="left:1362px;width:113px"></span><span class="c ra n" style="left:1476px;width:63px;padding-right:3px;letter-spacing:-0.5px;word-spacing:0">18 303,68</span><i style="left:1535px;top:1px;width:4px;height:16px;background:#fff8d8"></i><span class="c ra n" style="left:1540px;width:63px;padding-right:3px;letter-spacing:-0.5px;word-spacing:0">558,66</span><i style="left:1599px;top:1px;width:4px;height:16px;background:#fff8d8"></i><span class="c ra n" style="left:1604px;width:63px;padding-right:3px;letter-spacing:-0.5px;word-spacing:0">73,00</span><i style="left:1663px;top:1px;width:4px;height:16px;background:#fff8d8"></i><span class="c ra n" style="left:1668px;width:63px;padding-right:3px;letter-spacing:-0.5px;word-spacing:0">21 803,68</span><i style="left:1727px;top:1px;width:4px;height:16px;background:#fff8d8"></i><span class="c ra n" style="left:1732px;width:62px;padding-right:3px;letter-spacing:-0.5px;word-spacing:0">-3 014,34</span><i style="left:1790px;top:1px;width:4px;height:16px;background:#fff8d8"></i><span class="c ra n" style="left:1795px;width:62px;padding-right:3px;letter-spacing:-0.5px;word-spacing:0"></span></div>
<div class="r alt" style="top:95px"><span class="c f" style="left:0px;width:367px">Кормилицина Людмила Алексеевна (вн. совм.) (0,13)</span><span class="c n" style="left:367px;width:88px">902-000724</span><span class="c ra n" style="left:455px;width:48px">0,13</span><span class="c" style="left:503px;width:48px">Внутр.</span><span class="c u" style="left:551px;width:96px">На карточку (2)</span><span class="c" style="left:647px;width:179px">Врач-акушер-гинеколог</span><span class="c" style="left:826px;width:78px">Самарское ...</span><span class="c n" style="left:904px;width:64px">4081781...</span><span class="c" style="left:968px;width:151px">38,5 сумир (0,13)</span><span class="c d" style="left:1119px;width:81px">01.01.2011</span><span class="c d" style="left:1281px;width:81px">01.01.2017</span><span class="c ra n" style="left:1476px;width:64px">3 523,20</span><span class="c ra n" style="left:1668px;width:64px">3 523,20</span></div>
<div class="r" style="top:114px"><span class="c f" style="left:0px;width:367px">Кранзеева Юлия Михайловна (вн. совм.) (0,26)</span><span class="c n" style="left:367px;width:88px">902-013445</span><span class="c ra n" style="left:455px;width:48px">0,26</span><span class="c" style="left:503px;width:48px">Внутр.</span><span class="c u" style="left:551px;width:96px">На карточку (2)</span><span class="c" style="left:647px;width:179px">Медицинская сестра</span><span class="c" style="left:826px;width:78px">Самарское ...</span><span class="c n" style="left:904px;width:64px">4081781...</span><span class="c" style="left:968px;width:151px">38,5 сумир (0,26)</span><span class="c d" style="left:1119px;width:81px">01.08.2014</span><span class="c d" style="left:1281px;width:81px">01.01.2017</span><span class="c ra n" style="left:1476px;width:64px">3 819,10</span><span class="c ra n" style="left:1668px;width:64px">3 819,10</span></div>
<div class="r alt" style="top:133px"><span class="c f" style="left:0px;width:367px">Кулиш Ирина Валерьевна (осн.) (сд_0) (1,00)</span><span class="c n" style="left:367px;width:88px">0000115075</span><span class="c ra n" style="left:455px;width:48px">1,00</span><span class="c" style="left:503px;width:48px">Осн.</span><span class="c u" style="left:551px;width:96px">На карточку (2)</span><span class="c" style="left:647px;width:179px">Медицинская сестра</span><span class="c" style="left:826px;width:78px">Самарское ...</span><span class="c n" style="left:904px;width:64px">4081781...</span><span class="c" style="left:968px;width:151px">38,5 сумир</span><span class="c d" style="left:1119px;width:81px">13.05.1998</span><span class="c d" style="left:1281px;width:81px">01.01.2017</span><span class="c ra n" style="left:1476px;width:64px">19 803,14</span><span class="c ra n" style="left:1668px;width:64px">22 303,14</span><span class="c ra n" style="left:1732px;width:63px">-2 500,00</span></div>
<div class="r" style="top:152px"><span class="c f" style="left:0px;width:367px">Курбангалиева Наталья Николаевна (вн. совм.) (0,10)</span><span class="c n" style="left:367px;width:88px">902-000722</span><span class="c ra n" style="left:455px;width:48px">0,10</span><span class="c" style="left:503px;width:48px">Внутр.</span><span class="c u" style="left:551px;width:96px">На карточку (2)</span><span class="c" style="left:647px;width:179px">Врач-кардиолог</span><span class="c" style="left:826px;width:78px">Самарское ...</span><span class="c n" style="left:904px;width:64px">4081781...</span><span class="c" style="left:968px;width:151px">38,5 сумир (0,1)</span><span class="c d" style="left:1119px;width:81px">01.08.2013</span><span class="c d" style="left:1281px;width:81px">01.01.2017</span><span class="c ra n" style="left:1476px;width:64px">41,75</span><span class="c ra n" style="left:1668px;width:64px">41,75</span></div>
<div class="r alt" style="top:171px"><span class="c f" style="left:0px;width:367px">Курушкина Елена Николаевна (осн.) (сд_0) (1,00)</span><span class="c n" style="left:367px;width:88px">0000101027</span><span class="c ra n" style="left:455px;width:48px">1,00</span><span class="c" style="left:503px;width:48px">Осн.</span><span class="c u" style="left:551px;width:96px">На карточку (2)</span><span class="c" style="left:647px;width:179px">Медицинская сестра процедур...</span><span class="c" style="left:826px;width:78px">Самарское ...</span><span class="c n" style="left:904px;width:64px">4081781...</span><span class="c" style="left:968px;width:151px">38,5 часов в неделю для ...</span><span class="c d" style="left:1119px;width:81px">04.04.1988</span><span class="c d" style="left:1281px;width:81px">01.01.2017</span><span class="c ra n" style="left:1476px;width:64px">24 905,88</span><span class="c ra n" style="left:1668px;width:64px">28 905,88</span><span class="c ra n" style="left:1732px;width:63px">-4 000,00</span></div>
<div class="r" style="top:190px"><span class="c f" style="left:0px;width:367px">Лазарева Светлана Владимировна (вн. совм.) (0,14)</span><span class="c n" style="left:367px;width:88px">902-005517</span><span class="c ra n" style="left:455px;width:48px">0,14</span><span class="c" style="left:503px;width:48px">Внутр.</span><span class="c u" style="left:551px;width:96px">На карточку (2)</span><span class="c" style="left:647px;width:179px">Медицинская сестра</span><span class="c" style="left:826px;width:78px">Самарское ...</span><span class="c n" style="left:904px;width:64px">4081781...</span><span class="c" style="left:968px;width:151px">38,5 сумир (0,14)</span><span class="c d" style="left:1119px;width:81px">12.01.2015</span><span class="c d" style="left:1281px;width:81px">01.01.2017</span><span class="c ra n" style="left:1476px;width:64px">10 513,52</span><span class="c ra n" style="left:1668px;width:64px">10 513,52</span></div>
<div class="r alt" style="top:209px"><span class="c f" style="left:0px;width:367px">Ларин Альберт Валериевич (вн. совм.) (0,22)</span><span class="c n" style="left:367px;width:88px">902-000727</span><span class="c ra n" style="left:455px;width:48px">0,22</span><span class="c" style="left:503px;width:48px">Внутр.</span><span class="c u" style="left:551px;width:96px">На карточку (2)</span><span class="c" style="left:647px;width:179px">Врач-офтальмолог</span><span class="c" style="left:826px;width:78px">Самарское ...</span><span class="c n" style="left:904px;width:64px">4081781...</span><span class="c" style="left:968px;width:151px">38,5 сумир (0,22)</span><span class="c d" style="left:1119px;width:81px">06.01.2013</span><span class="c d" style="left:1281px;width:81px">01.01.2017</span><span class="c ra n" style="left:1476px;width:64px">14 690,73</span><span class="c ra n" style="left:1668px;width:64px">14 690,73</span></div>
<div class="r" style="top:228px"><span class="c f" style="left:0px;width:367px">Лебедева Светлана Вячеславовна (вн. совм.) (0,10), (вн. совм.)</span><span class="c n" style="left:367px;width:88px">902-013822</span><span class="c ra n" style="left:455px;width:48px">0,10</span><span class="c" style="left:503px;width:48px">Внутр.</span><span class="c u" style="left:551px;width:96px">На карточку (2)</span><span class="c" style="left:647px;width:179px">Медицинская сестра</span><span class="c" style="left:826px;width:78px">Самарское ...</span><span class="c n" style="left:904px;width:64px">4081781...</span><span class="c" style="left:968px;width:151px">38,5 сумир (0,1)</span><span class="c d" style="left:1119px;width:81px">01.09.2016</span><span class="c d" style="left:1281px;width:81px">01.01.2017</span><span class="c ra n" style="left:1476px;width:64px">2 824,12</span><span class="c ra n" style="left:1668px;width:64px">2 824,12</span></div>
</div>
<i style="left:646px;top:21px;width:1px;height:237px;background:#d6d6d6"></i>
<div class="foot" style="left:0;top:258px;width:1858px;height:21px"><span class="fc ra" style="left:0px;width:367px;letter-spacing:-0.432px">Всего сотрудников: 78</span><span class="fc" style="left:367px;width:88px"></span><span class="fc ra n" style="left:455px;width:48px"></span><span class="fc" style="left:503px;width:48px"></span><span class="fc" style="left:551px;width:96px"></span><span class="fc" style="left:647px;width:179px"></span><span class="fc" style="left:826px;width:78px"></span><span class="fc" style="left:904px;width:64px"></span><span class="fc" style="left:968px;width:151px"></span><span class="fc" style="left:1119px;width:81px"></span><span class="fc" style="left:1200px;width:81px"></span><span class="fc" style="left:1281px;width:81px"></span><span class="fc" style="left:1362px;width:114px"></span><span class="fc ra n" style="left:1476px;width:64px">716 590,16</span><span class="fc ra n" style="left:1540px;width:64px">86 628,33</span><span class="fc ra n" style="left:1604px;width:64px">10 715,59</span><span class="fc ra n" style="left:1668px;width:64px">822 501,41</span><span class="fc ra n" style="left:1732px;width:63px">-29 998,51</span><span class="fc ra n" style="left:1795px;width:63px"></span></div>
<div class="vsb" style="left:1858px;top:21px;width:14px;height:258px"></div><i class="up" style="left:1861px;top:8px"></i><i class="trk" style="left:1862px;top:23px;height:233px"></i><i class="thm" style="left:1862px;top:108px;height:31px"></i><i class="dn" style="left:1861px;top:265px"></i>
</div>
<div class="dash" style="left:19px;top:535px;width:1874px"></div>
<div class="vdash" style="left:1212px;top:538px;height:454px"></div>
<div style="left:19px;top:538px;width:1190px;height:34px;background:#fbeb9d"></div>
<div style="left:134px;top:542px;width:111px;height:26px;background:#fffef0"></div>
<svg style="left:24.5px;top:549px" width="13" height="14" viewBox="0 0 13 14"><path d="M4 2.200V.600h8.300v10h-1.700" fill="none" stroke="#444" stroke-width="1.100"/><path d="M2.300 3.900V2.300h8.300v10H9" fill="none" stroke="#444" stroke-width="1.100"/><rect x=".600" y="4" width="8.300" height="9.400" fill="#fbeb9d" stroke="#444" stroke-width="1.100"/><path d="M2.200 6.600h5M2.200 8.700h5M2.200 10.800h5" stroke="#444" stroke-width="1"/></svg><span style="left:43px;top:546.4px;font-size:14px;line-height:18px;letter-spacing:-0.579px;color:#333;text-decoration:underline;text-underline-offset:2.500px;text-decoration-thickness:1.300px;">Основания</span><svg style="left:137.500px;top:546.500px" width="16" height="16" viewBox="0 0 16 16"><defs><linearGradient id="ck" x1="0" y1="0" x2="0" y2="1"><stop offset="0" stop-color="#f7f7f7"/><stop offset="1" stop-color="#d6d6d6"/></linearGradient></defs><circle cx="7.800" cy="8" r="7" fill="url(#ck)" stroke="#a6a6a6" stroke-width="1.100"/><path d="M7.800 3.500V8.300l2.800 2.400" fill="none" stroke="#8a8a8a" stroke-width="1.100"/></svg><span style="left:158px;top:546.4px;font-size:14px;line-height:18px;letter-spacing:-0.675px;color:#333;text-decoration:underline;text-underline-offset:2.500px;text-decoration-thickness:1.300px;">Учет времени</span><div style="left:158px;top:547px;width:84px;height:17px;border:1px dotted #666"></div><svg style="left:272px;top:548.500px" width="10" height="11" viewBox="0 0 10 11"><rect x=".600" y="1.600" width="8.800" height="8.800" rx="1" fill="#fff6cf" stroke="#3f3f3f" stroke-width="1.200"/><rect x=".600" y="1.600" width="8.800" height="2.400" fill="#3f3f3f"/><rect x="2" y="0" width="1.300" height="2.200" fill="#3f3f3f"/><rect x="6.700" y="0" width="1.300" height="2.200" fill="#3f3f3f"/><g fill="#3f3f3f"><rect x="2.200" y="5.200" width="1.200" height="1.200"/><rect x="4.400" y="5.200" width="1.200" height="1.200"/><rect x="6.600" y="5.200" width="1.200" height="1.200"/><rect x="2.200" y="7.400" width="1.200" height="1.200"/><rect x="4.400" y="7.400" width="1.200" height="1.200"/><rect x="6.600" y="7.400" width="1.200" height="1.200"/></g></svg><span style="left:289.3px;top:546.4px;font-size:14px;line-height:18px;letter-spacing:-0.789px;color:#333;text-decoration:underline;text-underline-offset:2.500px;text-decoration-thickness:1.300px;">Табель (Т-13)</span><svg style="left:392px;top:547px" width="17" height="16" viewBox="0 0 17 16"><text x=".500" y="7.500" class="sf" font-size="9.500" font-weight="bold" fill="#333" letter-spacing="-0.300">Дт</text><text x="5.500" y="15.500" class="sf" font-size="9.500" font-weight="bold" fill="#333" letter-spacing="-0.300">Кт</text></svg><span style="left:412px;top:546.4px;font-size:14px;line-height:18px;letter-spacing:-0.165px;color:#333;text-decoration:underline;text-underline-offset:2.500px;text-decoration-thickness:1.300px;">Бух. учет</span><span style="left:494.5px;top:544.8px;font-size:16px;line-height:21px;letter-spacing:0px;color:#333;font-weight:bold;">%</span><span style="left:514.4px;top:546.4px;font-size:14px;line-height:18px;letter-spacing:-0.504px;color:#333;text-decoration:underline;text-underline-offset:2.500px;text-decoration-thickness:1.300px;">Налог на доходы</span><span style="left:19.3px;top:577.1px;font-size:12px;line-height:16px;letter-spacing:0.064px;color:#222;font-weight:bold;">Учет рабочего времени</span><span style="left:20.3px;top:596.8px;font-size:12px;line-height:16px;letter-spacing:-0.437px;color:#1a4bbd;text-decoration:underline;">Заполнить "в целом" за период</span><span style="left:192.3px;top:596.8px;font-size:12px;line-height:16px;letter-spacing:-0.54px;color:#1a4bbd;text-decoration:underline;">Заполнить табель</span><div class="grid" id="tt" style="left:19px;top:618px;width:1190px;height:376px">
<div class="hc" style="left:0px;top:0;width:95px;padding-left:4px">Период с ... по ...</div><div class="hc" style="left:95px;top:0;width:92px;padding-left:4px">Норма (ч.)</div><div class="hc" style="left:187px;top:0;width:60px;padding-left:4px">Норма (д.)</div><div class="hc" style="left:247px;top:0;width:85px;padding-left:4px">Отработано (ч.)</div><div class="hc" style="left:332px;top:0;width:86px;padding-left:4px">Отработано (д.)</div><div class="hc" style="left:418px;top:0;width:111px;padding-left:8px">КолВ.</div><div class="hc" style="left:529px;top:0;width:110px;padding-left:7px">Опл. час. ПиВ</div><div class="hc" style="left:639px;top:0;width:549px;padding-left:8px;border-right:0">Час. праздн.</div>
<div class="r sel" style="top:21px;font-style:normal;height:18px;border:0"><span class="c cur" style="left:0px;width:94px">01 - 31</span><span class="c ra n" style="left:95px;width:91px;padding-right:5px">153,000</span><span class="c ra n" style="left:187px;width:59px;padding-right:5px">20,000</span><span class="c ra n" style="left:247px;width:84px;padding-right:5px">153,000</span><span class="c ra n" style="left:332px;width:85px;padding-right:5px">20,000</span><span class="c" style="left:418px;width:110px"></span><span class="c" style="left:529px;width:109px"></span><span class="c" style="left:639px;width:549px"></span></div>
<i style="left:0;top:39px;width:1188px;height:1px;background:#e2e2e2"></i><i style="left:94px;top:21px;width:1px;height:18px;background:#c2c2c2"></i><div class="foot" style="left:0;top:353px;width:1188px;height:21px"><span class="fc ra n" style="left:0px;width:95px"></span><span class="fc ra n" style="left:95px;width:92px">153,000</span><span class="fc ra n" style="left:187px;width:60px">20,000</span><span class="fc ra n" style="left:247px;width:85px">153,000</span><span class="fc ra n" style="left:332px;width:86px">20,000</span><span class="fc ra n" style="left:418px;width:111px"></span><span class="fc ra n" style="left:529px;width:110px"></span><span class="fc ra n" style="left:639px;width:549px;border-right:0"></span></div></div>
<span style="left:19.2px;top:1002.8px;font-size:12px;line-height:16px;letter-spacing:-0.577px;color:#333;">Комментарий:</span><div class="inp" style="left:142px;top:1000px;width:328px;border-radius:3px;border-color:#8e8e8e"></div>
<span style="left:477.7px;top:1002.8px;font-size:12px;line-height:16px;letter-spacing:-0.575px;color:#333;">Ответственный:</span><div class="inp" style="left:564px;top:1000px;width:327px"><i style="left:306px;top:0;width:1px;height:18px;background:#c6c6c6"></i><span style="left:2.5px;top:1.8px;font-size:12px;line-height:16px;letter-spacing:-0.504px;color:#222;">Рачкова Н.И.</span><svg style="left:311px;top:3.5px" width="11" height="11" viewBox="0 0 11 11"><path d="M4 3.500V1.500h5.500v5.500H7.500" fill="none" stroke="#444" stroke-width="1.100"/><rect x="1.500" y="4" width="5.500" height="5.500" rx=".700" fill="#fff" stroke="#444" stroke-width="1.100"/></svg></div>
<svg style="left:900px;top:1003px" width="17" height="14" viewBox="0 0 17 14"><rect x=".600" y=".600" width="12.800" height="9.800" rx="1" fill="#f4f4f4" stroke="#8a8a8a" stroke-width="1.100"/><path d="M3 3.500h8M3 5.500h8M3 7.500h5" stroke="#999" stroke-width="1"/><path d="M10.500 10.500l2 2 3.500-4" fill="none" stroke="#2a9a3a" stroke-width="1.800"/></svg><span style="left:924.6px;top:1002.8px;font-size:12px;line-height:16px;letter-spacing:-0.508px;color:#333;">Текущий документ:</span><span style="left:1029.5px;top:1002.8px;font-size:12px;line-height:16px;letter-spacing:-0.559px;color:#2356b8;">Начисление зарплаты и взносов 0000-000810 от 31.05.2018</span><div style="left:1217px;top:538px;width:253px;height:25px;background:#fbeb9d"></div>
<div style="left:1221px;top:542px;width:17px;height:17px;background:#fff;border:1px solid #cfcab0;border-radius:3px"><svg style="left:5px;top:3.500px" width="6" height="8" viewBox="0 0 6 8"><path d="M1 .800L4.600 4 1 7.200" fill="none" stroke="#1a8f3a" stroke-width="1.400"/></svg></div><span style="left:1241px;top:541.1px;font-size:14px;line-height:18px;letter-spacing:-0.601px;color:#1b9636;">Показать настройки расчетного листа</span><div class="btn" style="left:1217px;top:569px;width:26px;height:21px"><svg style="left:5px;top:2.500px" width="14" height="14" viewBox="0 0 14 14"><path d="M4.500 2.500V.600h8.900v8.900h-1.900" fill="#f4f6f8" stroke="#5a7a92" stroke-width="1"/><path d="M2.800 4.200V2.300h8.900v8.900H9.800" fill="#f4f6f8" stroke="#5a7a92" stroke-width="1"/><rect x=".600" y="4.200" width="9.200" height="9.200" rx=".800" fill="#fff" stroke="#3f6a8a" stroke-width="1.100"/></svg></div>
<div class="btn" style="left:1249px;top:569px;width:133px;height:21px"><span style="left:8.5px;top:2.2px;font-size:12px;line-height:16px;letter-spacing:-0.581px;color:#333;">Отмена исправлений</span><i class="dd" style="left:122.5px;top:9px"></i></div>
<div class="grid" id="rt" style="left:1217px;top:597px;width:676px;height:356px">
<div class="hc" style="left:0px;top:0;width:24px"></div><div class="hc" style="left:24px;top:0;width:169px">Вид расчета</div><div class="hc" style="left:193px;top:0;width:89px">Сумма</div><div class="hc" style="left:282px;top:0;width:378px">Период</div><div class="body" style="left:0;top:21px;width:660px;height:298px">
<div class="r bold sel" style="top:0px"><i class="band"></i><i style="left:281px;top:1px;width:1px;height:16px;background:#fff"></i><span class="c cb cur" style="left:0;width:23px"><i class="chk"></i></span><span class="c" style="left:24px;width:169px">Начислено</span><span class="c ra n" style="left:193px;width:89px">558,66</span><span class="c p" style="left:282px;width:128px">Май 2018</span></div>
<div class="r grn it ul" style="top:19px"><span class="c cb" style="left:0;width:23px"><i class="chk"></i></span><span class="c" style="left:24px;width:169px">Надбавка за выслугу лет</span><span class="c ra n" style="left:193px;width:89px;padding-right:3px;letter-spacing:-0.5px;word-spacing:0">-1 216,80</span><i style="left:277px;top:0;width:4px;height:18px;background:#d9f0ca"></i><span class="c p" style="left:282px;width:128px">Апрель 2018</span><span class="c" style="left:410px;width:127px">01-30 04/18</span><span class="c" style="left:537px;width:113px">сд_04.01.1 Платн...</span><span class="c" style="left:650px;width:10px">2</span></div>
<div class="r grn it ul" style="top:38px"><span class="c cb" style="left:0;width:23px"><i class="chk"></i></span><span class="c" style="left:24px;width:169px">Доплата за работу с вредны...</span><span class="c ra n" style="left:193px;width:89px;padding-right:3px;letter-spacing:-0.5px;word-spacing:0">-324,48</span><i style="left:277px;top:0;width:4px;height:18px;background:#d9f0ca"></i><span class="c p" style="left:282px;width:128px">Апрель 2018</span><span class="c" style="left:410px;width:127px">01-30 04/18</span><span class="c" style="left:537px;width:113px">сд_04.01.1 Платн...</span><span class="c" style="left:650px;width:10px">2</span></div>
<div class="r grn it ul" style="top:57px"><span class="c cb" style="left:0;width:23px"><i class="chk"></i></span><span class="c" style="left:24px;width:169px">Оклад</span><span class="c ra n" style="left:193px;width:89px;padding-right:3px;letter-spacing:-0.5px;word-spacing:0">-8 112,00</span><i style="left:277px;top:0;width:4px;height:18px;background:#d9f0ca"></i><span class="c p" style="left:282px;width:128px">Апрель 2018</span><span class="c" style="left:410px;width:127px">01-30 04/18; -160,7ч; -...</span><span class="c" style="left:537px;width:113px">сд_04.01.1 Платн...</span><span class="c" style="left:650px;width:10px">2</span></div>
<div class="r grn ul" style="top:76px"><span class="c cb" style="left:0;width:23px"><i class="chk"></i></span><span class="c" style="left:24px;width:169px">Надбавка за выслугу лет</span><span class="c ra n" style="left:193px;width:89px">1 287,22</span><span class="c p" style="left:282px;width:128px">Апрель 2018</span><span class="c" style="left:410px;width:127px">01-30 04/18;  Проц. в...</span><span class="c" style="left:537px;width:113px">сд_04.01.1 Платн...</span><span class="c" style="left:650px;width:10px">2</span></div>
<div class="r grn ul" style="top:95px"><span class="c cb" style="left:0;width:23px"><i class="chk"></i></span><span class="c" style="left:24px;width:169px">Доплата за работу с вредны...</span><span class="c ra n" style="left:193px;width:89px">343,26</span><span class="c p" style="left:282px;width:128px">Апрель 2018</span><span class="c" style="left:410px;width:127px">01-30 04/18;  Проц. В...</span><span class="c" style="left:537px;width:113px">сд_04.01.1 Платн...</span><span class="c" style="left:650px;width:10px">2</span></div>
<div class="r grn ul" style="top:114px"><span class="c cb" style="left:0;width:23px"><i class="chk"></i></span><span class="c" style="left:24px;width:169px">Оклад</span><span class="c ra n" style="left:193px;width:89px">8 581,46</span><span class="c p" style="left:282px;width:128px">Апрель 2018</span><span class="c" style="left:410px;width:127px">01-30 04/18; 21д;  Ко...</span><span class="c" style="left:537px;width:113px">сд_04.01.1 Платн...</span><span class="c" style="left:650px;width:10px">2</span></div>
<div class="r bold" style="top:133px"><span class="c cb" style="left:0;width:23px"><i class="chk"></i></span><span class="c" style="left:24px;width:169px">Аванс</span><span class="c p" style="left:282px;width:128px">Май 2018</span></div>
<div class="r alt" style="top:152px"><span class="c cb" style="left:0;width:23px"><i class="chk"></i></span><span class="c" style="left:24px;width:169px">Аванс удержанный</span><span class="c ra n" style="left:193px;width:89px">-3 500,00</span><span class="c p" style="left:282px;width:128px">Май 2018</span><span class="c" style="left:537px;width:113px">сд_04.01.1 Платн...</span><span class="c" style="left:650px;width:10px">2</span></div>
<div class="r" style="top:171px"><span class="c cb" style="left:0;width:23px"><i class="chk"></i></span><span class="c" style="left:24px;width:169px">Аванс начисленный</span><span class="c ra n" style="left:193px;width:89px">3 500,00</span><span class="c p" style="left:282px;width:128px">Май 2018</span><span class="c" style="left:537px;width:113px">сд_04.01.1 Платн...</span><span class="c" style="left:650px;width:10px">2</span></div>
<div class="r bold alt" style="top:190px"><span class="c cb" style="left:0;width:23px"><i class="chk"></i></span><span class="c" style="left:24px;width:169px">Удержано</span><span class="c p" style="left:282px;width:128px">Май 2018</span></div>
<div class="r grn it ul" style="top:209px"><span class="c cb" style="left:0;width:23px"><i class="chk"></i></span><span class="c" style="left:24px;width:169px">Профвзносы</span><span class="c ra n" style="left:193px;width:89px;padding-right:3px;letter-spacing:-0.5px;word-spacing:0">-93,57</span><i style="left:277px;top:0;width:4px;height:18px;background:#d9f0ca"></i><span class="c p" style="left:282px;width:128px">Апрель 2018</span><span class="c" style="left:537px;width:113px">сд_04.01.1 Платн...</span><span class="c" style="left:650px;width:10px">2</span></div>
<div class="r grn it ul" style="top:228px"><span class="c cb" style="left:0;width:23px"><i class="chk"></i></span><span class="c" style="left:24px;width:169px">Добров.страх.взносы ОПС н...</span><span class="c ra n" style="left:193px;width:89px;padding-right:3px;letter-spacing:-0.5px;word-spacing:0">-500,00</span><i style="left:277px;top:0;width:4px;height:18px;background:#d9f0ca"></i><span class="c p" style="left:282px;width:128px">Апрель 2018</span><span class="c" style="left:537px;width:113px">сд_04.01.1 Платн...</span><span class="c" style="left:650px;width:10px">2</span></div>
<div class="r grn it ul" style="top:247px"><span class="c cb" style="left:0;width:23px"><i class="chk"></i></span><span class="c" style="left:24px;width:169px">Профвзносы</span><span class="c ra n" style="left:193px;width:89px;padding-right:3px;letter-spacing:-0.5px;word-spacing:0">93,57</span><i style="left:277px;top:0;width:4px;height:18px;background:#d9f0ca"></i><span class="c p" style="left:282px;width:128px">Апрель 2018</span><span class="c" style="left:537px;width:113px">сд_04.01.1 Платн...</span><span class="c" style="left:650px;width:10px">2</span></div>
<div class="r grn it ul" style="top:266px"><span class="c cb" style="left:0;width:23px"><i class="chk"></i></span><span class="c" style="left:24px;width:169px">Добров.страх.взносы ОПС н...</span><span class="c ra n" style="left:193px;width:89px;padding-right:3px;letter-spacing:-0.5px;word-spacing:0">500,00</span><i style="left:277px;top:0;width:4px;height:18px;background:#d9f0ca"></i><span class="c p" style="left:282px;width:128px">Апрель 2018</span><span class="c" style="left:537px;width:113px">сд_04.01.1 Платн...</span><span class="c" style="left:650px;width:10px">2</span></div>
<div class="r bold" style="top:285px"><span class="c cb" style="left:0;width:23px"><i class="chk"></i></span><span class="c" style="left:24px;width:169px">НДФЛ</span><span class="c ra n" style="left:193px;width:89px">73,00</span><span class="c p" style="left:282px;width:128px">Май 2018</span></div>
</div>
<i style="left:192px;top:21px;width:1px;height:299px;background:#cfcfcf"></i>
<div class="foot" style="left:0;top:319px;width:660px;height:20px"><span class="fc" style="left:0px;width:24px"></span><span class="fc" style="left:24px;width:169px"></span><span class="fc" style="left:193px;width:89px"></span></div>
<div class="vsb" style="left:660px;top:21px;width:14px;height:319px"></div><i class="up lt" style="left:663px;top:8px"></i><i class="trk" style="left:663px;top:24px;height:292px"></i><i class="thm dark" style="left:663px;top:24px;height:156px"></i><i class="dn" style="left:663px;top:327px"></i>
<div class="hsb" style="left:0;top:339px;width:674px;height:15px"><i class="lf" style="left:9px"></i><i class="htrk" style="left:23px;width:614px"></i><i class="hthm" style="left:23px;width:336px"></i><i class="rt" style="left:647px"></i></div>
</div>
<div class="red" style="left:1240px;top:635px;width:344px;height:66px"></div>
<div class="red" style="left:1240px;top:700px;width:343px;height:55px"></div>
<div class="red" style="left:1237px;top:828px;width:348px;height:41px"></div>
<div class="red" style="left:1237px;top:871px;width:348px;height:34px"></div>
<span style="left:1217px;top:958.8px;font-size:12px;line-height:16px;letter-spacing:-0.517px;color:#333;">Начислено страх. взносов:</span><span style="left:1377.4px;top:957.6px;font-size:12px;line-height:16px;letter-spacing:0.41px;color:#222;font-weight:bold;">0,00</span><span style="left:1217px;top:978.8px;font-size:12px;line-height:16px;letter-spacing:-0.573px;color:#333;">Предоставлено вычетов:</span><span style="left:1377.4px;top:977.6px;font-size:12px;line-height:16px;letter-spacing:0.41px;color:#222;font-weight:bold;">0,00</span><span style="left:1466px;top:979.1px;font-size:12px;line-height:16px;letter-spacing:-0.346px;color:#1a4bbd;text-decoration:underline;">Подробнее о расчете НДФЛ</span></div>
</body></html>
